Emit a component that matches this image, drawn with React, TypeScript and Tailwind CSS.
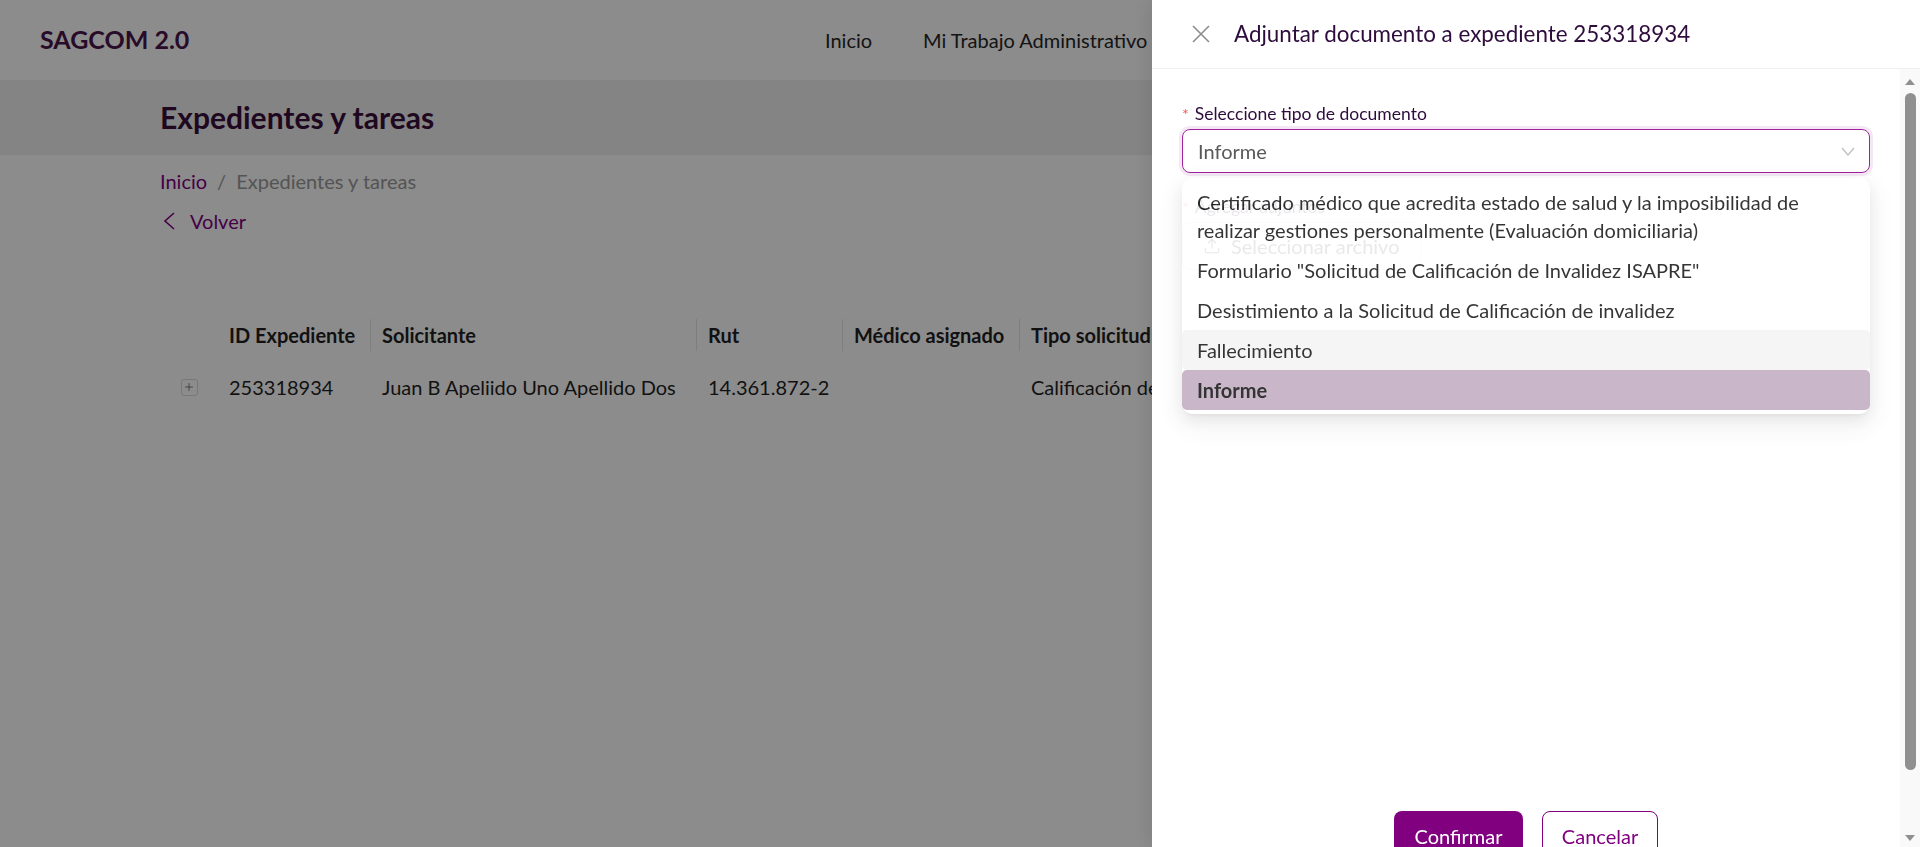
import { Upload, Plus } from 'lucide-react'

const OPTIONS = [
  { label: 'Formulario "Solicitud de Calificación de Invalidez ISAPRE"' },
  { label: 'Desistimiento a la Solicitud de Calificación de invalidez' },
  { label: 'Fallecimiento', hover: true },
  { label: 'Informe', selected: true },
]

const COLS = 'grid grid-cols-[58px_153px_326px_146px_177px_132px]'

function PageBehind() {
  return (
    <div className="w-full">
      <header className="h-[80px] flex items-center pl-10 bg-white">
        <div className="w-[785px] text-[25px] font-bold text-[#4a154a]">SAGCOM 2.0</div>
        <nav className="flex gap-[51px] text-[20px] text-[#262626]">
          <span>Inicio</span>
          <span>Mi Trabajo Administrativo</span>
        </nav>
      </header>

      <div className="h-[75px] bg-[#f0f0f0] flex items-center pl-[160px]">
        <h1 className="text-[30px] font-bold text-[#3a0f3a]">Expedientes y tareas</h1>
      </div>

      <div className="pl-[160px] mt-[12px] flex items-center gap-[10px] leading-[28px] text-[20px]">
        <span className="text-[#800080]">Inicio</span>
        <span className="text-[#999]">/</span>
        <span className="text-[#999]">Expedientes y tareas</span>
      </div>

      <div className="pl-[163px] mt-[12px] flex items-center gap-[15px] leading-[28px] text-[20px] text-[#800080]">
        <svg width="12" height="18" viewBox="0 0 12 18" fill="none">
          <path d="M11 1 L2 9 L11 17" stroke="#800080" strokeWidth="1.6" />
        </svg>
        <span>Volver</span>
      </div>

      <div className="ml-[160px] mt-[75px] text-[20px] text-[#1f1f1f]">
        <div className={`${COLS} h-[50px] items-center font-bold`}>
          <div />
          {['ID Expediente', 'Solicitante', 'Rut', 'Médico asignado', 'Tipo solicitud'].map((h, i) => (
            <div
              key={h}
              className={`relative pl-[11px] h-full flex items-center whitespace-nowrap overflow-hidden ${
                i < 4 ? "after:absolute after:right-0 after:top-[9px] after:h-[32px] after:w-px after:bg-[#e6e6e6] after:content-['']" : ''
              }`}
            >
              {h}
            </div>
          ))}
        </div>
        <div className={`${COLS} h-[54px] items-center`}>
          <div className="flex justify-center">
            <span className="w-[17px] h-[17px] border border-[#d9d9d9] rounded-[3px] flex items-center justify-center text-[#595959]">
              <Plus size={12} strokeWidth={1.5} />
            </span>
          </div>
          <div className="pl-[11px]">253318934</div>
          <div className="pl-[11px]">Juan B Apeliido Uno Apellido Dos</div>
          <div className="pl-[11px]">14.361.872-2</div>
          <div className="pl-[11px]"></div>
          <div className="pl-[11px] whitespace-nowrap overflow-hidden">Calificación de</div>
        </div>
      </div>
    </div>
  )
}

function Scrollbar() {
  return (
    <div className="w-[20px] bg-[#f9f9f9] flex flex-col items-center pt-[10px] pb-[6px]">
      <svg width="10" height="6" viewBox="0 0 10 6">
        <path d="M5 0 L10 6 L0 6 Z" fill="#8f8f8f" />
      </svg>
      <div className="mt-[8px] w-[11px] h-[677px] rounded-full bg-[#8f8f8f]" />
      <div className="flex-1" />
      <svg width="10" height="6" viewBox="0 0 10 6">
        <path d="M0 0 L10 0 L5 6 Z" fill="#8f8f8f" />
      </svg>
    </div>
  )
}

function Drawer() {
  return (
    <aside className="fixed top-0 right-0 h-screen w-[768px] bg-white flex flex-col shadow-[-6px_0_16px_0_rgba(0,0,0,0.08)]">
      <div className="h-[69px] shrink-0 border-b border-[#f0f0f0] flex items-center pl-[40px] gap-[24px]">
        <svg width="18" height="18" viewBox="0 0 18 18" fill="none">
          <path d="M1 1 L17 17 M17 1 L1 17" stroke="#8c8c8c" strokeWidth="1.6" />
        </svg>
        <h2 className="text-[22.4px] text-[#2e0c3c]">Adjuntar documento a expediente 253318934</h2>
      </div>

      <div className="flex flex-1 min-h-0 overflow-hidden">
        <div className="flex-1 px-[30px] pt-[31px]">
          <label className="flex items-center gap-[6px] h-[28px] text-[17.5px] text-[#2e0c3c]">
            <span className="text-[#ff4d4f] text-[16px]">*</span>
            Seleccione tipo de documento
          </label>

          <div className="relative mt-[1px]">
            <div className="h-[44px] rounded-[8px] border border-[#a0229e] shadow-[0_0_0_3px_rgba(160,34,158,0.1)] flex items-center justify-between pl-[15px] pr-[14px]">
              <span className="text-[20px] text-[#595959]">Informe</span>
              <svg width="14" height="9" viewBox="0 0 14 9" fill="none">
                <path d="M1 1 L7 8 L13 1" stroke="#bfbfbf" strokeWidth="1.3" />
              </svg>
            </div>

            <div className="absolute z-10 top-[49px] left-0 right-0 bg-white rounded-[10px] py-[4px] opacity-90 shadow-[0_6px_16px_0_rgba(0,0,0,0.08),0_3px_6px_-4px_rgba(0,0,0,0.12),0_9px_28px_8px_rgba(0,0,0,0.05)]">
              <div className="px-[15px] py-[6px] leading-[28px] text-[20px] text-[#1f1f1f] rounded-[5px]">
                Certificado médico que acredita estado de salud y la imposibilidad de
                <br />
                realizar gestiones personalmente (Evaluación domiciliaria)
              </div>
              {OPTIONS.map((o) => (
                <div
                  key={o.label}
                  className={`px-[15px] py-[6px] leading-[28px] text-[20px] text-[#1f1f1f] rounded-[5px] ${
                    o.selected ? 'bg-[#c4b0c4] font-bold' : o.hover ? 'bg-[#f5f5f5]' : ''
                  }`}
                >
                  {o.label}
                </div>
              ))}
            </div>
          </div>

          <label className="mt-[20px] flex items-center gap-[6px] h-[28px] text-[17.5px] text-[#2e0c3c]">
            <span className="text-[#ff4d4f] text-[16px]">*</span>
            Agregar adjuntos
          </label>
          <div className="mt-[1px] h-[48px] w-[239px] border border-[#d9d9d9] rounded-[8px] flex items-center pl-[20px] gap-[10px] text-[20px] text-[#1f1f1f]">
            <Upload size={18} strokeWidth={1.5} />
            Seleccionar archivo
          </div>

          <div className="mt-[541px] flex justify-center gap-[19px] text-[20px]">
            <button className="w-[129px] h-[50px] rounded-[8px] bg-[#800080] text-white">Confirmar</button>
            <button className="w-[116px] h-[50px] rounded-[8px] border border-[#800080] text-[#800080] bg-white">
              Cancelar
            </button>
          </div>
        </div>
        <Scrollbar />
      </div>
    </aside>
  )
}

export default function App() {
  return (
    <div className="relative h-screen w-full overflow-hidden bg-white font-['Lato',sans-serif]">
      <PageBehind />
      <div className="fixed inset-0 bg-black/45" />
      <Drawer />
    </div>
  )
}
